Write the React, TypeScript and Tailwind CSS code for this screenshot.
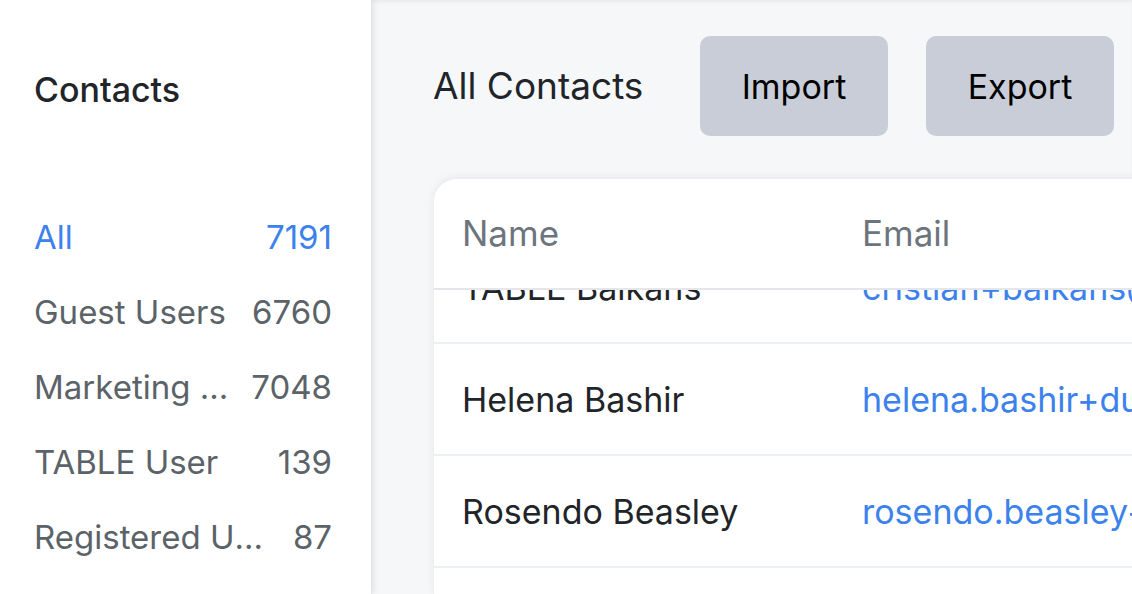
import React from "react";

const groups = [
  { label: "All", count: "7191", active: true },
  { label: "Guest Users", count: "6760" },
  { label: "Marketing Contacts", count: "7048" },
  { label: "TABLE User", count: "139" },
  { label: "Registered Users", count: "87" },
];

const rows = [
  { name: "TABLE Balkans", email: "cristian+balkans@table.com" },
  { name: "Helena Bashir", email: "helena.bashir+dummy@example.com" },
  { name: "Rosendo Beasley", email: "rosendo.beasley+dummy@example.com" },
  { name: "Mina Becker", email: "mina.becker+dummy@example.com" },
];

export default function App() {
  return (
    <div
      className="flex h-[594px] w-[1132px] overflow-hidden bg-[#f6f7f9]"
      style={{ fontFamily: "Inter, 'Noto Sans', sans-serif" }}
    >
      <aside className="relative z-10 flex w-[372px] shrink-0 flex-col bg-white pl-[34px] pr-[39px] shadow-[2px_0_6px_rgba(0,0,0,0.08)] border-r border-[#e4e6e9]">
        <h1 className="mt-[70px] text-[34px] font-medium leading-[40px] text-[#212529]">
          Contacts
        </h1>
        <ul className="mt-[90px] flex flex-col">
          {groups.map((g) => (
            <li
              key={g.label}
              className={`flex h-[75px] items-center text-[33px] ${
                g.active ? "text-[#3b82ec]" : "text-[#5b6369]"
              }`}
            >
              <span className="min-w-0 flex-1 truncate">{g.label}</span>
              <span className="ml-[20px] shrink-0">{g.count}</span>
            </li>
          ))}
        </ul>
      </aside>
      <main className="relative flex min-w-0 flex-1 flex-col pl-[61px] pt-[36px] shadow-[inset_0_3px_4px_-2px_rgba(0,0,0,0.08)]">
        <div className="flex items-center">
          <h2 className="w-[267px] shrink-0 text-[37px] leading-[44px] text-[#212529]">
            All Contacts
          </h2>
          <button className="h-[100px] w-[188px] shrink-0 rounded-[10px] bg-[#c9cdd8] text-[34px] text-black">
            Import
          </button>
          <button className="ml-[38px] h-[100px] w-[188px] shrink-0 rounded-[10px] bg-[#c9cdd8] text-[34px] text-black">
            Export
          </button>
        </div>
        <div className="mt-[41px] flex w-[1000px] flex-1 flex-col overflow-hidden rounded-tl-[24px] rounded-tr-[24px] border-t-2 border-l border-[#eceef1] bg-white shadow-[0_0_8px_rgba(0,0,0,0.06)]">
          <div className="flex h-[111px] shrink-0 items-center border-b-2 border-[#e4e6e9] pl-[28px] text-[35px] text-[#6c757d]">
            <div className="w-[400px] shrink-0">Name</div>
            <div>Email</div>
          </div>
          <div className="flex-1 overflow-hidden">
            <div className="-mt-[58px]">
              {rows.map((r) => (
                <div
                  key={r.name}
                  className="flex h-[112px] items-center border-b-2 border-[#edf0f3] pl-[28px] text-[34px]"
                >
                  <div className="w-[400px] shrink-0 text-[#212529]">{r.name}</div>
                  <div className="whitespace-nowrap text-[#3b82ec]">{r.email}</div>
                </div>
              ))}
            </div>
          </div>
        </div>
      </main>
    </div>
  );
}
